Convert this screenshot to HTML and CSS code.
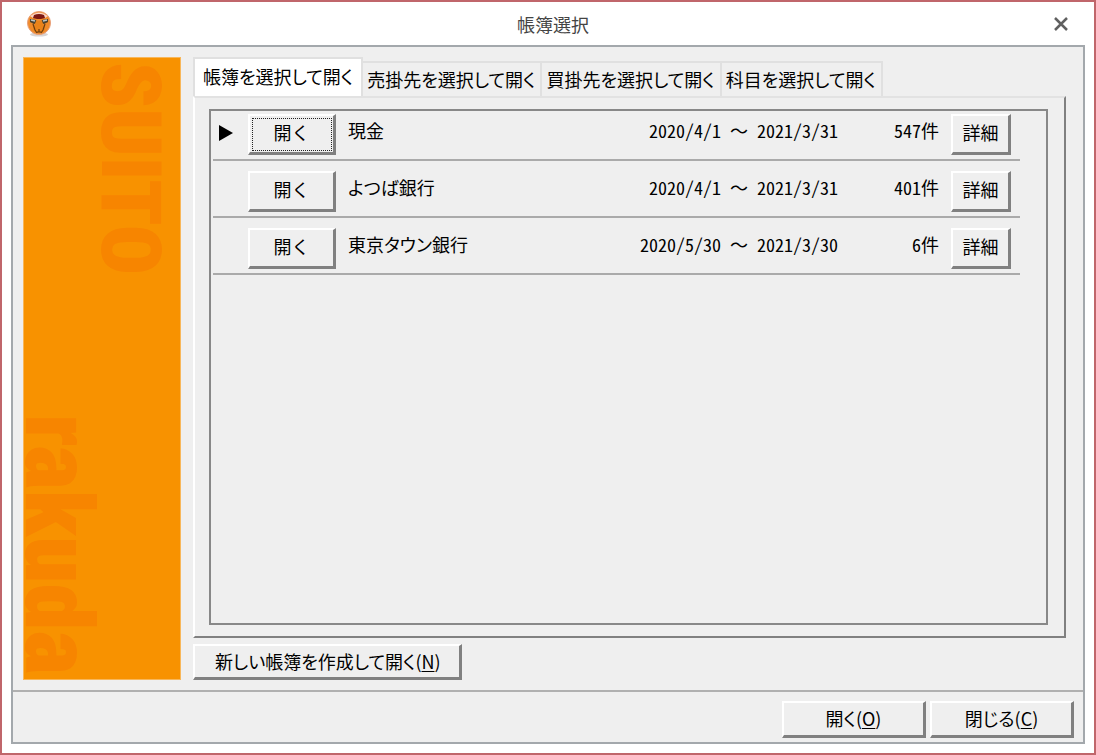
FILE: index.html
```html
<!DOCTYPE html>
<html lang="ja">
<head>
  <meta charset="UTF-8">
  <meta name="viewport" content="width=device-width, initial-scale=1.0">
  <title>帳簿選択</title>
  <link rel="stylesheet" href="styles.css">
</head>
<body>
  <div class="window">
    <header class="titlebar">
      <svg class="app-icon" viewBox="0 0 26 26" aria-hidden="true">
        <ellipse cx="13" cy="23.500" rx="9" ry="2" fill="#d8d4d4"/>
        <circle cx="13" cy="12" r="11.500" fill="#f08b2a" stroke="#e8a07c"/>
        <path d="M4 5Q13-2 22 5L19 7H7z" fill="#fbd3c4"/>
        <path d="M8 4q5-2 10 0l1 3-4 1h-4L7 7z" fill="#7d1712"/>
        <path d="M4 8l6 1 1 3-3 1-4-2zM22 8l-6 1-1 3 3 1 4-2z" fill="#4a4230"/>
        <path d="M5 9l4 1M21 9l-4 1" stroke="#b9c4c8" stroke-width="1.500"/>
        <path d="M10 10h6l3 8-3 4h-6l-3-4z" fill="#e9831a"/>
        <path d="M7 13l2 6 2 3M19 13l-2 6-2 3M13 18v3M11 21h4" fill="none" stroke="#6a3c10" stroke-width="1.200"/>
      </svg>
      <h1 class="title">帳簿選択</h1>
      <button class="close" aria-label="閉じる">
        <svg viewBox="0 0 14 14" width="14" height="14"><path d="M1 1l12 12M13 1L1 13" stroke="#606060" stroke-width="2.500"/></svg>
      </button>
    </header>

    <div class="frame">
      <div class="content">
        <aside class="banner">
          <span class="banner-suito">SUITO</span>
          <span class="banner-rakuda">rakuda</span>
        </aside>

        <main class="main">
          <div class="tabs" role="tablist">
            <button class="tab active" role="tab" aria-selected="true">帳簿を選択して開く</button>
            <button class="tab" role="tab">売掛先を選択して開く</button>
            <button class="tab" role="tab">買掛先を選択して開く</button>
            <button class="tab" role="tab">科目を選択して開く</button>
          </div>

          <div class="panel" role="tabpanel">
            <div class="list">
              <table class="books">
                <tr>
                  <td class="mark"><svg viewBox="0 0 14 16" width="14" height="16"><path d="M0 0l14 8L0 16z"/></svg></td>
                  <td class="open"><button class="btn btn-open focused">開く</button></td>
                  <td class="name">現金</td>
                  <td class="term">2020/4/1 <span class="wave">～</span> 2021/3/31</td>
                  <td class="count">547件</td>
                  <td class="detail"><button class="btn btn-detail">詳細</button></td>
                </tr>
                <tr>
                  <td class="mark"></td>
                  <td class="open"><button class="btn btn-open">開く</button></td>
                  <td class="name">よつば銀行</td>
                  <td class="term">2020/4/1 <span class="wave">～</span> 2021/3/31</td>
                  <td class="count">401件</td>
                  <td class="detail"><button class="btn btn-detail">詳細</button></td>
                </tr>
                <tr>
                  <td class="mark"></td>
                  <td class="open"><button class="btn btn-open">開く</button></td>
                  <td class="name">東京タウン銀行</td>
                  <td class="term">2020/5/30 <span class="wave">～</span> 2021/3/30</td>
                  <td class="count">6件</td>
                  <td class="detail"><button class="btn btn-detail">詳細</button></td>
                </tr>
              </table>
            </div>
          </div>

          <button class="btn btn-new">新しい帳簿を作成して開く(<u>N</u>)</button>
        </main>
      </div>

      <footer class="footer">
        <button class="btn btn-footer">開く(<u>O</u>)</button>
        <button class="btn btn-footer">閉じる(<u>C</u>)</button>
      </footer>
    </div>
  </div>
</body>
</html>
```
FILE: styles.css
```css
* { box-sizing:border-box; }
body { margin:0; background:#fff; color:#000; font-family:"Noto Sans CJK JP", sans-serif; font-size:18px; line-height:24px; }
button { font:inherit; color:inherit; padding:0; cursor:pointer; }
svg { display:block; }

.window { min-height:100vh; display:flex; flex-direction:column; border:2px solid #c0666b; padding:0 9px 9px; }

/* title bar */
.titlebar { height:43px; display:grid; grid-template-columns:70px 1fr 60px; align-items:center; }
.app-icon { width:26px; height:26px; margin-left:15px; }
.title { margin:0; font-size:18px; font-weight:400; text-align:center; color:#444; }
.close { width:32px; height:32px; display:grid; place-items:center; justify-self:end; margin-right:8px; border:0; background:none; }

.frame { flex:1; display:flex; flex-direction:column; border:2px solid #a3a8ac; background:#efefef; }
.content { flex:1; display:flex; gap:12px; padding:10px 16px 10px 10px; }

/* orange banner */
.banner { width:158px; display:flex; flex-direction:column; align-items:flex-start; justify-content:space-between; background:#f89200; border:1px solid #f8b75a; color:#f78500; font-family:"Roboto Condensed", Roboto, sans-serif; font-weight:900; }
.banner span { writing-mode:vertical-rl; }
.banner-suito { align-self:flex-end; font-size:84px; line-height:100px; padding-top:4px; }
.banner-rakuda { font-size:95px; line-height:68px; padding-bottom:4px; }

.main { flex:1; min-width:0; display:flex; flex-direction:column; align-items:flex-start; }

/* tabs */
.tabs { display:flex; align-items:flex-end; }
.tab { height:35px; padding:0 5px 2px 4px; border:2px solid #e0e0e0; border-width:2px 2px 0 0; background:#efefef; font-feature-settings:"palt"; white-space:nowrap; }
.tab.active { height:39px; padding:0 8px 4px; border-left-width:2px; background:#fff; }

.panel { flex:1; align-self:stretch; display:flex; margin-right:1px; padding:11px 16px 11px 14px; border:2px solid; border-color:#e2e2e2 #808080 #808080 #fff; }
.list { flex:1; border:2px solid #888; padding:0 26px 0 2px; }

/* book list */
.books { width:100%; border-collapse:collapse; }
.books tr { height:57px; border-bottom:2px solid #aaa; }
.books tr:first-child { height:49px; }
.books td { padding:0 0 4px; vertical-align:bottom; white-space:nowrap; }
.books .mark { width:35px; padding:0 0 18px 6px; }
.books .open { width:100px; }
.books .name, .books .term, .books .count { padding-bottom:17px; }
.books .name { font-feature-settings:"palt"; }
.books .term, .books .count { text-align:right; font-feature-settings:"hwid"; }
.books .wave { font-feature-settings:normal; }
.books .count { width:101px; }
.books .detail { width:81px; padding-left:12px; }

/* raised buttons */
.btn { border:2px solid; border-color:#fff #808080 #808080 #fff; border-right-width:3px; border-bottom-width:3px; background:#efefef; font-feature-settings:"palt"; white-space:nowrap; }
.btn u { text-underline-offset:2px; }
.btn-open, .btn-detail { display:block; height:41px; padding-bottom:4px; font-feature-settings:normal; }
.btn-open { width:88px; }
.btn-detail { width:60px; }
.focused { outline:1px dotted #222; outline-offset:-5px; }
.btn-new { height:36px; margin-top:6px; padding:0 18px 2px 20px; }

.footer { display:flex; justify-content:flex-end; gap:4px; padding:9px 9px 4px; border-top:2px solid #b0b0b0; }
.btn-footer { width:144px; height:37px; padding-bottom:2px; }
```
